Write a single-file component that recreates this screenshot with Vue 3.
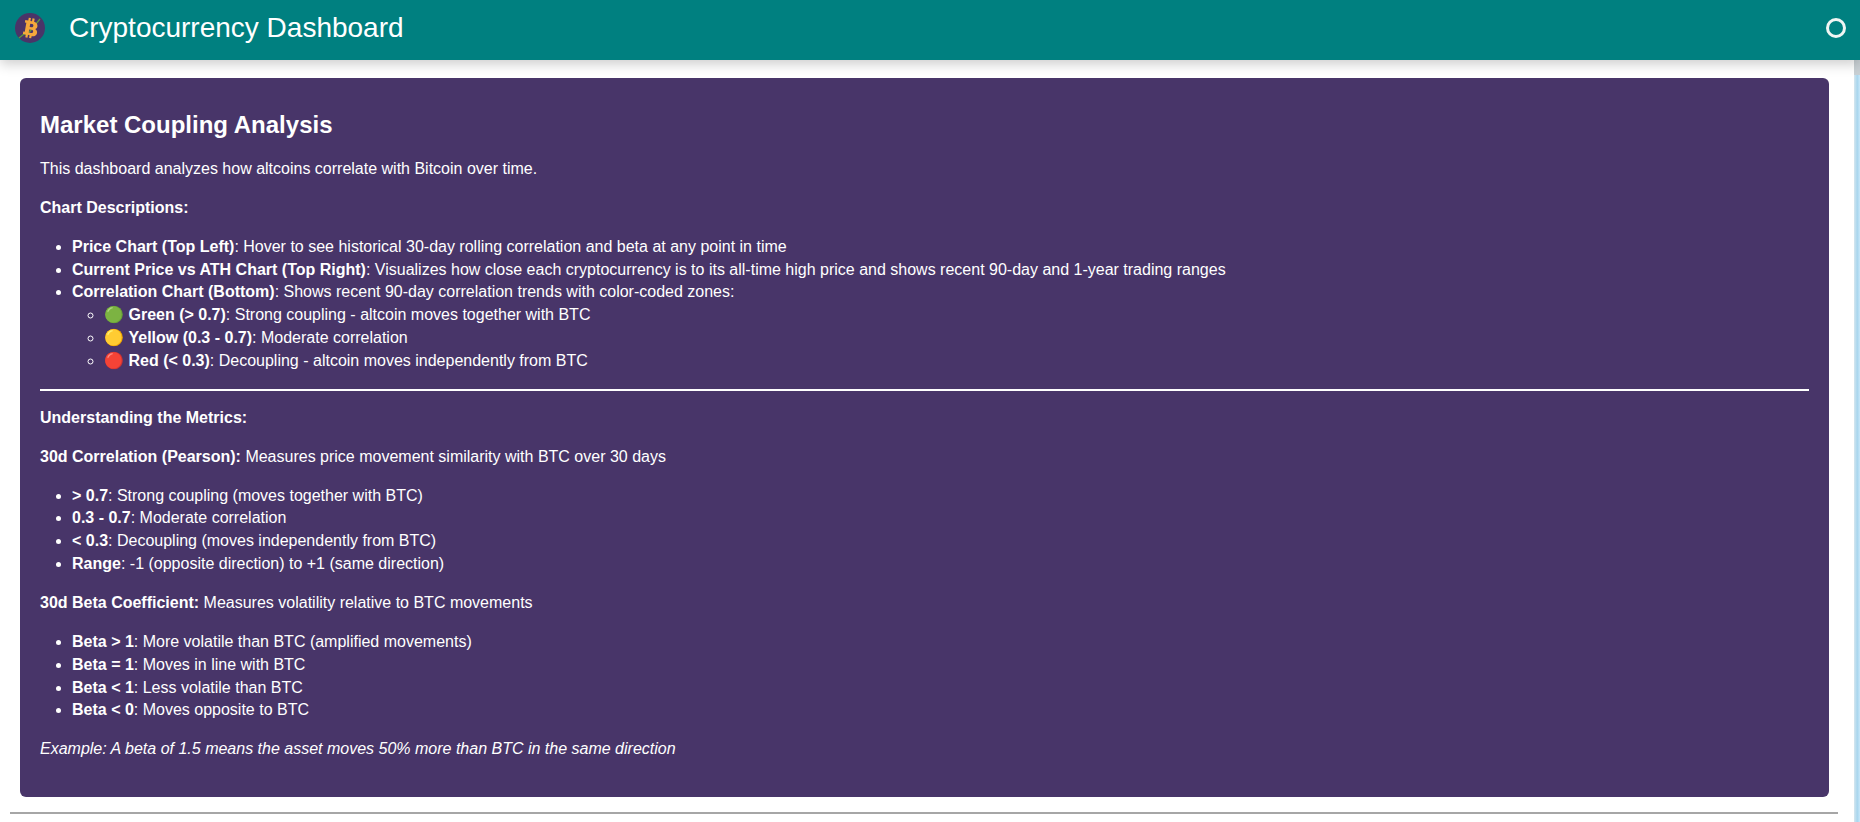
<script setup>
const chartItems = [
  { label: 'Price Chart (Top Left)', text: ': Hover to see historical 30-day rolling correlation and beta at any point in time' },
  { label: 'Current Price vs ATH Chart (Top Right)', text: ': Visualizes how close each cryptocurrency is to its all-time high price and shows recent 90-day and 1-year trading ranges' },
]
const zones = [
  { emoji: '🟢', label: 'Green (> 0.7)', text: ': Strong coupling - altcoin moves together with BTC' },
  { emoji: '🟡', label: 'Yellow (0.3 - 0.7)', text: ': Moderate correlation' },
  { emoji: '🔴', label: 'Red (< 0.3)', text: ': Decoupling - altcoin moves independently from BTC' },
]
const corr = [
  { label: '> 0.7', text: ': Strong coupling (moves together with BTC)' },
  { label: '0.3 - 0.7', text: ': Moderate correlation' },
  { label: '< 0.3', text: ': Decoupling (moves independently from BTC)' },
  { label: 'Range', text: ': -1 (opposite direction) to +1 (same direction)' },
]
const beta = [
  { label: 'Beta > 1', text: ': More volatile than BTC (amplified movements)' },
  { label: 'Beta = 1', text: ': Moves in line with BTC' },
  { label: 'Beta < 1', text: ': Less volatile than BTC' },
  { label: 'Beta < 0', text: ': Moves opposite to BTC' },
]
</script>

<template>
  <div class="page">
    <header class="topbar">
      <svg class="logo" viewBox="0 0 30 30" width="30" height="30" aria-hidden="true">
        <circle cx="15" cy="15" r="15" fill="#4a3468" />
        <path d="M4 25 L9 21 L12 22 L25 6" fill="none" stroke="#5f9a3c" stroke-width="1.3" />
        <path transform="rotate(10 15 15)" fill="#f5a83c" fill-rule="evenodd" d="M9 8h3V5h2.200v3h1.600V5H18v3.200c2.600.4 4 1.900 4 4 0 1.400-.7 2.400-1.800 3 1.700.6 2.600 1.900 2.600 3.500 0 2.500-1.900 4-4.800 4.200V25h-2.200v-2.900h-1.600V25H12v-2.900H9v-2.400h1.500v-9.200H9zM14.500 10.800v3.200h2c1 0 1.500-.7 1.500-1.600s-.5-1.600-1.500-1.600zM14.500 16.500v3.300h2.600c1 0 1.600-.7 1.600-1.650s-.6-1.650-1.600-1.650z" />
      </svg>
      <h1 class="title">Cryptocurrency Dashboard</h1>
      <span class="spinner"></span>
    </header>

    <main class="content">
      <section class="card">
        <h2 class="heading">Market Coupling Analysis</h2>
        <p>This dashboard analyzes how altcoins correlate with Bitcoin over time.</p>
        <p><strong>Chart Descriptions:</strong></p>
        <ul>
          <li v-for="item in chartItems" :key="item.label"><strong>{{ item.label }}</strong>{{ item.text }}</li>
          <li>
            <strong>Correlation Chart (Bottom)</strong>: Shows recent 90-day correlation trends with color-coded zones:
            <ul class="nested">
              <li v-for="z in zones" :key="z.label">
                {{ z.emoji }} <strong>{{ z.label }}</strong>{{ z.text }}
              </li>
            </ul>
          </li>
        </ul>
        <hr class="rule" />
        <p><strong>Understanding the Metrics:</strong></p>
        <p><strong>30d Correlation (Pearson):</strong> Measures price movement similarity with BTC over 30 days</p>
        <ul>
          <li v-for="item in corr" :key="item.label"><strong>{{ item.label }}</strong>{{ item.text }}</li>
        </ul>
        <p><strong>30d Beta Coefficient:</strong> Measures volatility relative to BTC movements</p>
        <ul>
          <li v-for="item in beta" :key="item.label"><strong>{{ item.label }}</strong>{{ item.text }}</li>
        </ul>
        <p class="last"><em>Example: A beta of 1.5 means the asset moves 50% more than BTC in the same direction</em></p>
      </section>
      <hr class="footer-rule" />
    </main>
    <div class="scrollbar"><div class="thumb"></div></div>
  </div>
</template>

<style>
html, body { margin: 0; background: #fff; overflow: hidden; }
</style>

<style scoped>
.page {
  position: relative;
  height: 822px;
  overflow: hidden;
  font-family: "Liberation Sans", Arial, sans-serif;
  font-size: 16px;
  line-height: 22.86px;
  color: #fff;
}
.topbar {
  position: relative;
  z-index: 2;
  height: 60px;
  box-sizing: border-box;
  display: flex;
  align-items: center;
  padding: 0 14px 4px 15px;
  background: #008080;
  box-shadow: 0 4px 12px rgba(0, 0, 0, 0.2);
}
.logo { flex: none; }
.title {
  margin: 0 0 0 24px;
  font-size: 28px;
  font-weight: 400;
  line-height: 36px;
  flex: 1;
}
.spinner {
  width: 20px;
  height: 20px;
  box-sizing: border-box;
  border: 3px solid #f1f5f3;
  border-radius: 50%;
}
.content { padding: 18px 31px 0 20px; }
.card {
  background: #483569;
  border-radius: 6px;
  padding: 20px 20px 24px;
  height: 719px;
  box-sizing: border-box;
}
.heading {
  margin: 13px 0 19px;
  font-size: 24px;
  line-height: 28px;
  font-weight: 700;
}
p { margin: 16px 0; }
ul { margin: 16px 0; padding-left: 32px; }
ul.nested { margin: 0; list-style-type: circle; }
.rule {
  margin: 16px 0;
  border: 0;
  height: 2px;
  background: #fff;
}
.footer-rule {
  margin: 15px -9px 0 -10px;
  border: 0;
  height: 2px;
  background: #a6a6a6;
}
.scrollbar {
  position: absolute;
  top: 60px;
  right: 0;
  bottom: 0;
  width: 6px;
  background: linear-gradient(90deg, #d5e6ef, #a9d6ee 55%, #c8e8fa);
}
.thumb {
  height: 15px;
  background: #c9d0d4;
}
</style>
